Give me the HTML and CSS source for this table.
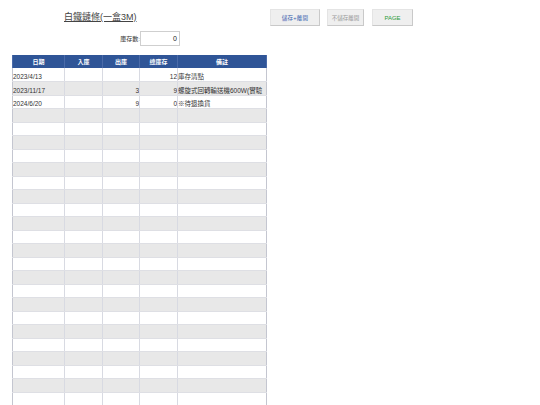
FILE: index.html
```html
<!DOCTYPE html>
<html lang="zh-Hant">
<head>
<meta charset="utf-8">
<link rel="stylesheet" href="styles.css">
</head>
<body>
<div class="top">
  <div class="title">白鐵鏈條(一盒3M)</div>
  <div class="buttons">
    <button class="btn btn-save">儲存+離開</button>
    <button class="btn btn-nosave">不儲存離開</button>
    <button class="btn btn-page">PAGE</button>
  </div>
</div>
<div class="stock">
  <span class="stock-label">庫存數:</span>
  <span class="stock-box">0</span>
</div>
<table class="grid">
  <colgroup>
    <col class="c1"><col class="c2"><col class="c3"><col class="c4"><col class="c5">
  </colgroup>
  <thead>
    <tr><th>日期</th><th>入庫</th><th>出庫</th><th>總庫存</th><th>備註</th></tr>
  </thead>
  <tbody>
    <tr><td>2023/4/13</td><td></td><td></td><td class="num">12</td><td class="note">庫存清點</td></tr>
    <tr><td>2023/11/17</td><td></td><td class="num">3</td><td class="num">9</td><td class="note">螺旋式回轉輸送機600W(實驗</td></tr>
    <tr><td>2024/6/20</td><td></td><td class="num">9</td><td class="num">0</td><td class="note">※待退換貨</td></tr>
    <tr><td></td><td></td><td></td><td></td><td></td></tr>
    <tr><td></td><td></td><td></td><td></td><td></td></tr>
    <tr><td></td><td></td><td></td><td></td><td></td></tr>
    <tr><td></td><td></td><td></td><td></td><td></td></tr>
    <tr><td></td><td></td><td></td><td></td><td></td></tr>
    <tr><td></td><td></td><td></td><td></td><td></td></tr>
    <tr><td></td><td></td><td></td><td></td><td></td></tr>
    <tr><td></td><td></td><td></td><td></td><td></td></tr>
    <tr><td></td><td></td><td></td><td></td><td></td></tr>
    <tr><td></td><td></td><td></td><td></td><td></td></tr>
    <tr><td></td><td></td><td></td><td></td><td></td></tr>
    <tr><td></td><td></td><td></td><td></td><td></td></tr>
    <tr><td></td><td></td><td></td><td></td><td></td></tr>
    <tr><td></td><td></td><td></td><td></td><td></td></tr>
    <tr><td></td><td></td><td></td><td></td><td></td></tr>
    <tr><td></td><td></td><td></td><td></td><td></td></tr>
    <tr><td></td><td></td><td></td><td></td><td></td></tr>
    <tr><td></td><td></td><td></td><td></td><td></td></tr>
    <tr><td></td><td></td><td></td><td></td><td></td></tr>
    <tr><td></td><td></td><td></td><td></td><td></td></tr>
    <tr><td></td><td></td><td></td><td></td><td></td></tr>
    <tr><td></td><td></td><td></td><td></td><td></td></tr>
    <tr><td></td><td></td><td></td><td></td><td></td></tr>
  </tbody>
</table>
</body>
</html>
```

FILE: styles.css
```css
html, body {
  margin: 0;
  padding: 0;
  background: #ffffff;
  font-family: "Liberation Sans", "Noto Sans CJK TC", sans-serif;
  color: #333333;
  overflow: hidden;
}

.top {
  display: flex;
  align-items: flex-start;
  padding: 9px 0 0 64px;
  height: 22px;
}

.title {
  width: 206px;
  margin-top: 2px;
  font-size: 9px;
  line-height: 12px;
  color: #444;
  text-decoration: underline;
}

.buttons {
  display: flex;
  gap: 7px;
}

.btn {
  height: 17px;
  padding: 0;
  margin: 0;
  font-family: "Liberation Sans", "Noto Sans CJK TC", sans-serif;
  font-size: 5.5px;
  background: #efefef;
  border: 1px solid #e4e4e4;
  border-right-color: #c9c9c9;
  border-bottom-color: #c9c9c9;
}

.btn-save { width: 50px; color: #3a64b0; letter-spacing: 0.3px; }
.btn-nosave { width: 37px; color: #9a9a9a; }
.btn-page { width: 41px; color: #2e9a3a; font-size: 6px; margin-left: 1px; }

.stock {
  display: flex;
  align-items: center;
  padding-left: 116px;
  height: 14px;
}

.stock-label {
  width: 24px;
  font-size: 6px;
  color: #333;
  text-align: right;
}

.stock-box {
  width: 36px;
  height: 13px;
  border: 1px solid #cfcfcf;
  font-size: 7px;
  line-height: 13px;
  text-align: right;
  padding-right: 2px;
  box-sizing: content-box;
  color: #222;
}

.grid {
  margin: 10px 0 0 12px;
  border-collapse: collapse;
  table-layout: fixed;
  width: 254px;
}

.c1 { width: 52px; }
.c2 { width: 38px; }
.c3 { width: 37px; }
.c4 { width: 38px; }
.c5 { width: 89px; }

.grid th {
  height: 13px;
  padding: 0;
  background: #2f5597;
  color: #ffffff;
  font-size: 6px;
  font-weight: bold;
  border-left: 1px solid #4a6aa8;
  border-right: 1px solid #4a6aa8;
}

.grid td {
  height: 13.5px;
  padding: 0 0 1px 0;
  font-size: 6.5px;
  line-height: 7px;
  vertical-align: bottom;
  white-space: nowrap;
  overflow: hidden;
  color: #333;
  border-left: 1px solid #d8dae2;
  border-right: 1px solid #d8dae2;
  border-bottom: 1px solid #dedfe4;
  box-sizing: border-box;
}

.grid td:first-child { border-left: 1px solid #c4c6d0; }
.grid td:last-child { border-right: 1px solid #c4c6d0; }

.grid tbody tr:nth-child(even) td { background: #e8e8e8; }
.grid tbody tr:nth-child(odd) td { background: #ffffff; }

.grid td.num { text-align: right; }
.grid td.note { text-align: left; }
```
